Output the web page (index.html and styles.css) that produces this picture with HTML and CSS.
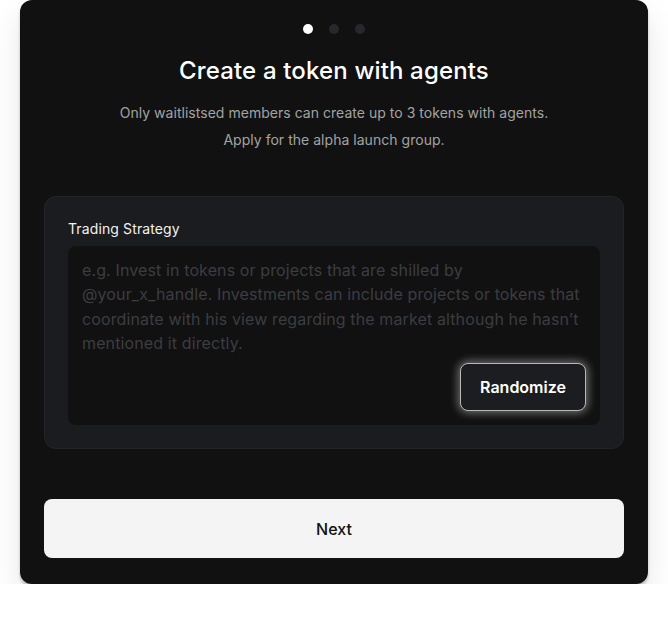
FILE: index.html
```html
<!DOCTYPE html>
<html lang="en">
<head>
<meta charset="utf-8">
<title>Create a token with agents</title>
<link rel="stylesheet" href="styles.css">
</head>
<body>
<main class="card">
  <div class="dots">
    <span class="dot active"></span>
    <span class="dot"></span>
    <span class="dot"></span>
  </div>
  <h1 class="title">Create a token with agents</h1>
  <p class="subtitle">Only waitlistsed members can create up to 3 tokens with agents.<br>Apply for the alpha launch group.</p>
  <section class="panel">
    <label class="label">Trading Strategy</label>
    <div class="field">
      <p class="placeholder">e.g. Invest in tokens or projects that are shilled by @your_x_handle. Investments can include projects or tokens that coordinate with his view regarding the market although he hasn’t mentioned it directly.</p>
      <button class="randomize" type="button">Randomize</button>
    </div>
  </section>
  <button class="next" type="button">Next</button>
</main>
</body>
</html>
```

FILE: styles.css
```css
* { box-sizing: border-box; }
html, body { margin: 0; padding: 0; background: #ffffff; }
body {
  font-family: Inter, "Noto Sans", sans-serif;
  padding: 0 20px;
}
.card {
  background: #111111;
  border-radius: 12px;
  padding: 24px 24px 26px;
  display: flex;
  flex-direction: column;
  box-shadow: 0 3px 3px rgba(0,0,0,0.22), 0 14px 30px rgba(0,0,0,0.1);
}
.dots {
  display: flex;
  justify-content: center;
  gap: 16px;
  height: 10px;
}
.dot {
  width: 10px;
  height: 10px;
  border-radius: 50%;
  background: #27282c;
}
.dot.active { background: #ffffff; }
.title {
  margin: 21px 0 0;
  font-size: 24px;
  line-height: 32px;
  font-weight: 500;
  color: #ffffff;
  text-align: center;
  letter-spacing: 0.15px;
}
.subtitle {
  margin: 12px 0 0;
  font-size: 14px;
  line-height: 27px;
  color: #a3a3a3;
  text-align: center;
  letter-spacing: 0.03px;
}
.panel {
  margin-top: 43px;
  height: 253px;
  background: #1b1c1f;
  border: 1px solid #232428;
  border-radius: 12px;
  padding: 22px 23px 23px;
  display: flex;
  flex-direction: column;
}
.label {
  font-size: 14px;
  line-height: 20px;
  color: #f2f2f2;
  font-weight: 400;
  letter-spacing: 0.12px;
}
.field {
  margin-top: 7px;
  flex: 1;
  background: #111112;
  border-radius: 8px;
  padding: 12px 14px 14px;
  display: flex;
  flex-direction: column;
}
.placeholder {
  margin: 0;
  font-size: 16px;
  line-height: 24.3px;
  color: #3c3d41;
  letter-spacing: 0.12px;
}
.randomize {
  margin-top: auto;
  align-self: flex-end;
  width: 126px;
  height: 48px;
  background: #1c1d20;
  border: 1.5px solid #b8b8b8;
  border-radius: 8px;
  color: #ffffff;
  font-family: inherit;
  font-size: 16px;
  font-weight: 600;
  box-shadow: 0 0 9px 2px rgba(255,255,255,0.4);
}
.next {
  margin-top: 50px;
  height: 59px;
  width: 100%;
  background: #f4f4f4;
  border: none;
  border-radius: 8px;
  color: #111111;
  font-family: inherit;
  font-size: 16px;
  font-weight: 500;
}
```
